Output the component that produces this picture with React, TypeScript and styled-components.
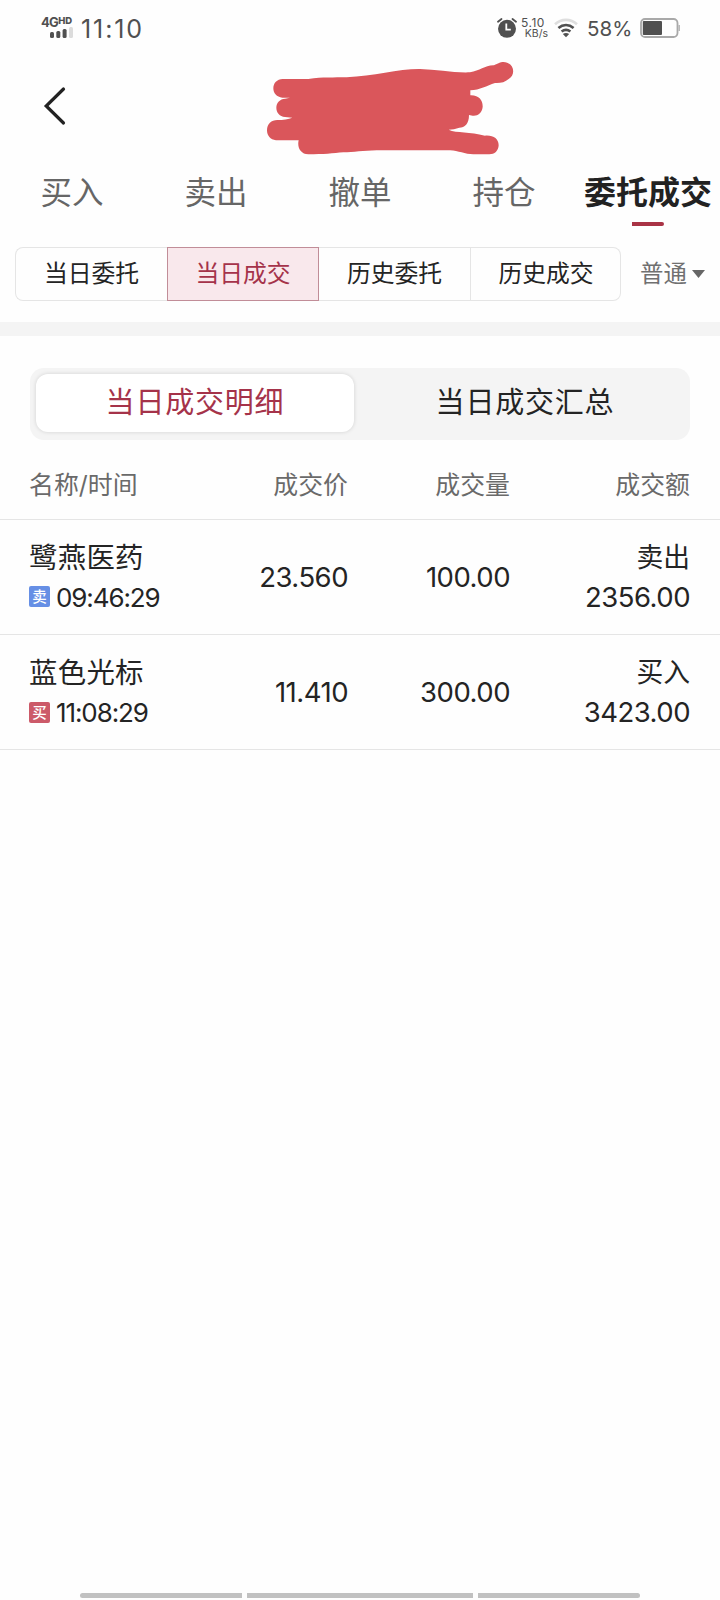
import React from 'react';
import styled, { createGlobalStyle, css } from 'styled-components';

const GlobalStyle = createGlobalStyle`
  * { box-sizing: border-box; }
  body {
    margin: 0;
    background: #fefefe;
    color: #242424;
    font-family: Inter, 'Noto Sans CJK SC', sans-serif;
  }
`;

const Screen = styled.div`
  width: 720px;
  height: 1600px;
  display: flex;
  flex-direction: column;
  background: #fefefe;
  overflow: hidden;
`;

const StatusBar = styled.header`
  height: 56px;
  padding: 0 40px 0 41px;
  display: flex;
  align-items: center;
  color: #505050;
`;

const Signal = styled.div`
  width: 33px;
  height: 24px;
  margin-right: 7px;
  display: flex;
  flex-direction: column;
  align-items: flex-end;
`;

const Network = styled.div`
  width: 33px;
  height: 11px;
  display: flex;
  align-items: flex-start;
  font-size: 13px;
  font-weight: 700;
  line-height: 13px;
  letter-spacing: -0.7px;
`;

const NetworkSup = styled.span`
  font-size: 9.5px;
  font-weight: 800;
  line-height: 9px;
  letter-spacing: 0;
`;

const Clock = styled.div`
  flex: 1;
  font-size: 25px;
  line-height: 30px;
  letter-spacing: 1.9px;
  padding-top: 1px;
`;

const Speed = styled.div`
  display: flex;
  flex-direction: column;
  width: 27px;
  margin: 0 6px 0 4px;
  font-size: 12px;
  letter-spacing: 0.5px;
  line-height: 11px;
`;

const SpeedUnit = styled.span`
  font-size: 10.5px;
  letter-spacing: 0;
  line-height: 11px;
  align-self: flex-end;
`;

const Percent = styled.div`
  width: 45px;
  margin: 0 8px 0 9px;
  font-size: 20.5px;
  line-height: 28px;
  padding-top: 1px;
`;

const TitleBar = styled.div`
  position: relative;
  height: 104px;
  padding: 30px 0 0 43px;
`;

const Scribble = styled.svg`
  position: absolute;
  left: 240px;
  top: -6px;
`;

const Tabs = styled.nav`
  height: 87px;
  display: grid;
  grid-template-columns: repeat(5, 144px);
`;

const Tab = styled.div<{ $active?: boolean }>`
  display: flex;
  flex-direction: column;
  align-items: center;
  padding-top: 9px;
  font-size: ${(p) => (p.$active ? 32 : 31.5)}px;
  line-height: 48px;
  white-space: nowrap;
  color: ${(p) => (p.$active ? '#222' : '#666')};
  font-weight: ${(p) => (p.$active ? 700 : 400)};
`;

const Underline = styled.span`
  width: 32px;
  height: 4px;
  margin-top: 5px;
  background: #a93345;
  border-radius: 0 2px 2px 0;
`;

const FilterRow = styled.div`
  height: 75px;
  padding-left: 15px;
  display: flex;
  align-items: flex-start;
`;

const Filters = styled.div`
  width: 606px;
  height: 54px;
  display: grid;
  grid-template-columns: 152px 152px 152px 150px;
`;

const Filter = styled.div<{ $active?: boolean }>`
  border: 1px solid #e5e5e5;
  border-left-width: 0;
  font-size: 23.8px;
  line-height: 51px;
  text-align: center;
  &:first-child {
    border-left-width: 1px;
    border-radius: 8px 0 0 8px;
    border-right-width: 0;
  }
  &:last-child {
    border-radius: 0 8px 8px 0;
    padding-left: 1px;
  }
  ${(p) =>
    p.$active &&
    css`
      color: #a5334a;
      background: #f9e8ec;
      border: 1px solid #c18d98;
    `}
`;

const AccountType = styled.div`
  margin-left: 19px;
  display: flex;
  align-items: center;
  gap: 5px;
  height: 54px;
  font-size: 23.4px;
  line-height: 54px;
  color: #707070;
`;

const AccountLabel = styled.span`
  height: 54px;
`;

const Divider = styled.div`
  height: 14px;
  background: #f4f4f4;
`;

const Segmented = styled.div`
  height: 72px;
  margin: 32px 30px 0;
  padding: 6px;
  display: grid;
  grid-template-columns: 318px 330px;
  background: #f4f4f4;
  border-radius: 14px;
`;

const Segment = styled.div<{ $active?: boolean }>`
  height: 58px;
  font-size: 29px;
  letter-spacing: 0.8px;
  line-height: 57px;
  text-align: center;
  border-radius: 12px;
  &:last-child {
    padding-left: 12px;
  }
  ${(p) =>
    p.$active &&
    css`
      color: #a5334a;
      background: #fff;
      box-shadow: 0 0 4px rgba(0, 0, 0, 0.14);
    `}
`;

const columns = css`
  display: grid;
  grid-template-columns: 169px 150px 162px 180px;
  padding: 0 30px 0 29px;
  border-bottom: 1px solid #e5e5e5;
`;

const TableHead = styled.div`
  ${columns}
  height: 80px;
  font-size: 24.9px;
  line-height: 91px;
  color: #6a6a6a;
`;

const HeadCell = styled.span<{ $right?: boolean }>`
  text-align: ${(p) => (p.$right ? 'right' : 'left')};
`;

const Trade = styled.div`
  ${columns}
  height: 115px;
`;

const Figure = styled.div`
  text-align: right;
  font-size: 27.5px;
  letter-spacing: -0.5px;
  line-height: 114px;
`;

const Stack = styled.div<{ $right?: boolean }>`
  display: flex;
  flex-direction: column;
  align-items: ${(p) => (p.$right ? 'flex-end' : 'flex-start')};
  padding-top: ${(p) => (p.$right ? 17 : 18)}px;
`;

const Name = styled.div<{ $small?: boolean }>`
  font-size: ${(p) => (p.$small ? 26.8 : 28.4)}px;
  letter-spacing: ${(p) => (p.$small ? 0 : 0.3)}px;
  line-height: 40px;
`;

const Amount = styled.div`
  font-size: 27.5px;
  line-height: 40px;
  letter-spacing: -0.5px;
`;

const TimeRow = styled.div`
  height: 40px;
  display: flex;
  align-items: center;
  gap: 6px;
`;

const Badge = styled.span<{ $buy?: boolean }>`
  width: 21px;
  height: 21px;
  border-radius: 2px;
  background: ${(p) => (p.$buy ? '#cc5a69' : '#668fe5')};
  color: #fff;
  font-size: 14.5px;
  font-weight: 500;
  line-height: 21px;
  text-align: center;
  margin-top: ${(p) => (p.$buy ? -1 : -3)}px;
`;

const Time = styled.span`
  font-size: 26px;
  line-height: 40px;
  letter-spacing: -1.1px;
`;

const HomeBar = styled.div`
  margin: auto 80px 2px;
  display: grid;
  grid-template-columns: 162px 226px 162px;
  gap: 5px;
`;

const HomePiece = styled.span`
  height: 5px;
  background: #c1c1c1;
  &:first-child { border-radius: 3px 0 0 3px; }
  &:last-child { border-radius: 0 3px 3px 0; }
`;

const trades = [
  { name: '鹭燕医药', time: '09:46:29', price: '23.560', volume: '100.00', side: '卖出', amount: '2356.00', buy: false },
  { name: '蓝色光标', time: '11:08:29', price: '11.410', volume: '300.00', side: '买入', amount: '3423.00', buy: true },
];

const SignalBars = () => (
  <svg width="24" height="11" viewBox="0 0 24 11" fill="#505050">
    <rect x="0" y="5" width="4" height="6" rx="1.5" />
    <rect x="6.3" y="4" width="4" height="7" rx="1.5" />
    <rect x="12.6" y="2" width="4" height="9" rx="1.5" />
    <rect x="19" y="0" width="4" height="11" rx="1.5" fill="#dcdcdc" />
  </svg>
);

const AlarmIcon = () => (
  <svg width="20" height="20" viewBox="0 0 20 20" fill="none">
    <circle cx="10" cy="10.8" r="9" fill="#505050" />
    <path d="M1 3.8 4.5 1M15.5 1 19 3.8" stroke="#505050" strokeWidth="1.8" strokeLinecap="round" />
    <path d="M9.3 5.5v6.2h4.5" stroke="#fff" strokeWidth="1.8" />
  </svg>
);

const WifiIcon = () => (
  <svg width="24" height="20" viewBox="0 0 24 20" fill="none" strokeWidth="2.6">
    <path d="M1 6.2C7.3.4 16.7.4 23 6.2" stroke="#dedede" />
    <path d="M4.4 10c4.6-4 10.6-4 15.2 0" stroke="#505050" />
    <path d="M7.6 13.6c2.8-2.3 6-2.3 8.8 0" stroke="#505050" />
    <path d="M8.8 16c2-1.5 4.4-1.5 6.4 0L12 19.2Z" fill="#505050" />
  </svg>
);

const BatteryIcon = () => (
  <svg width="40" height="20" viewBox="0 0 40 20" fill="none">
    <rect x="1" y="1" width="36.5" height="18" rx="4" stroke="#a9a9a9" strokeWidth="1.8" />
    <rect x="2.8" y="3" width="19.2" height="14" rx="1" fill="#505050" />
    <path d="M39.2 7v6" stroke="#a9a9a9" strokeWidth="1.2" />
  </svg>
);

export default function App() {
  return (
    <>
      <GlobalStyle />
      <Screen>
        <StatusBar>
          <Signal>
            <Network>4G<NetworkSup>HD</NetworkSup></Network>
            <SignalBars />
          </Signal>
          <Clock>11:10</Clock>
          <AlarmIcon />
          <Speed>
            <span>5.10</span>
            <SpeedUnit>KB/s</SpeedUnit>
          </Speed>
          <WifiIcon />
          <Percent>58%</Percent>
          <BatteryIcon />
        </StatusBar>

        <TitleBar>
          <svg width="24" height="40" viewBox="0 0 24 40" fill="none">
            <path d="M20.5 3 3.2 20 20.5 37" stroke="#222" strokeWidth="3.2" strokeLinecap="round" />
          </svg>
          <Scribble width="300" height="120" viewBox="0 0 900 360" fill="#da565b">
            <path d="M128 87H205C250 81 280 83 320 82C400 78 480 56 540 57C590 58 640 69 690 67C720 63 735 45 762 46C775 40 780 36 790 36C825 38 827 76 806 87C795 97 780 100 765 99C740 107 720 120 691 121V136C718 135 729 152 728 171C726 190 712 199 698 197L687 195C687 222 674 233 658 233C647 237 637 238 626 239C650 250 690 244 735 257C760 255 776 266 776 286C775 303 764 313 748 313H700C675 313 655 302 630 301H410C370 302 340 307 310 307C280 310 250 313 205 313C181 312 171 291 176 271H108C91 269 81 257 81 241C81 221 94 210 112 210C130 210 145 207 157 203L135 201C119 199 109 188 109 173C109 158 120 147 135 146L150 143H127C110 141 100 130 100 115C100 99 111 88 128 87Z" />
          </Scribble>
        </TitleBar>

        <Tabs>
          <Tab>买入</Tab>
          <Tab>卖出</Tab>
          <Tab>撤单</Tab>
          <Tab>持仓</Tab>
          <Tab $active>委托成交<Underline /></Tab>
        </Tabs>

        <FilterRow>
          <Filters>
            <Filter>当日委托</Filter>
            <Filter $active>当日成交</Filter>
            <Filter>历史委托</Filter>
            <Filter>历史成交</Filter>
          </Filters>
          <AccountType>
            <AccountLabel>普通</AccountLabel>
            <svg width="13" height="8" viewBox="0 0 13 8"><path d="M0 0h13L6.5 8Z" fill="#666" /></svg>
          </AccountType>
        </FilterRow>
        <Divider />

        <Segmented>
          <Segment $active>当日成交明细</Segment>
          <Segment>当日成交汇总</Segment>
        </Segmented>

        <TableHead>
          <HeadCell>名称/时间</HeadCell>
          <HeadCell $right>成交价</HeadCell>
          <HeadCell $right>成交量</HeadCell>
          <HeadCell $right>成交额</HeadCell>
        </TableHead>
        {trades.map((t) => (
          <Trade key={t.time}>
            <Stack>
              <Name>{t.name}</Name>
              <TimeRow>
                <Badge $buy={t.buy}>{t.side[0]}</Badge>
                <Time>{t.time}</Time>
              </TimeRow>
            </Stack>
            <Figure>{t.price}</Figure>
            <Figure>{t.volume}</Figure>
            <Stack $right>
              <Name $small>{t.side}</Name>
              <Amount>{t.amount}</Amount>
            </Stack>
          </Trade>
        ))}

        <HomeBar>
          <HomePiece />
          <HomePiece />
          <HomePiece />
        </HomeBar>
      </Screen>
    </>
  );
}
